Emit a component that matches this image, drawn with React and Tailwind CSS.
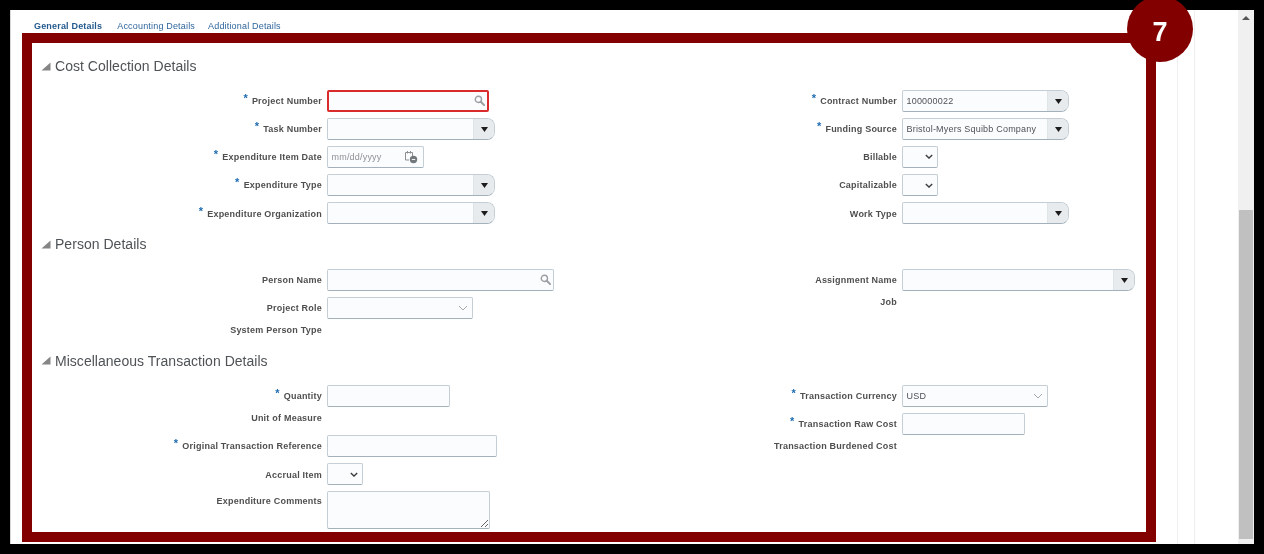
const FONT = "font-['Liberation_Sans',Arial,sans-serif]";

function Tri() {
  return (
    <svg width="10" height="9" viewBox="0 0 10 9" className="shrink-0">
      <path d="M9.5 0.5V8.5H0.5Z" fill="#858585" />
    </svg>
  );
}

function SearchIcon() {
  return (
    <svg width="11" height="11" viewBox="0 0 12 12" fill="none" className="shrink-0">
      <circle cx="4.8" cy="4.8" r="3.4" stroke="#9a9ea2" strokeWidth="1.5" />
      <path d="M7.4 7.4L11 11" stroke="#9a9ea2" strokeWidth="2.1" strokeLinecap="round" />
    </svg>
  );
}

function CalIcon() {
  return (
    <svg width="14" height="14" viewBox="0 0 14 14" fill="none" className="shrink-0">
      <path d="M1.5 2.5H8.5V6M1.5 2.5V10H5" stroke="#8b8f92" strokeWidth="1" />
      <path d="M3.5 1V3.5M6.5 1V3.5" stroke="#8b8f92" strokeWidth="1" />
      <circle cx="9.5" cy="9.5" r="3.7" fill="#73787c" />
      <path d="M7.8 9.5H11.2" stroke="#ffffff" strokeWidth="0.9" />
    </svg>
  );
}

function Chevron({ light }) {
  return (
    <svg width={light ? 10 : 8} height={light ? 6 : 5} viewBox="0 0 10 6" fill="none" className="shrink-0">
      <path d="M1 1L5 5L9 1" stroke={light ? "#a4abb0" : "#3f3f3f"} strokeWidth={light ? 1 : 1.7} />
    </svg>
  );
}

function Label({ req, children }) {
  return (
    <span className="text-[9px] leading-[12px] font-bold tracking-[0.22px] text-[#4f4f4f] whitespace-nowrap">
      {req && <span className="text-[#1d6bb0] text-[11px] leading-[0] font-bold relative -top-[2px] mr-[4px]">*</span>}
      {children}
    </span>
  );
}

function Box({ w, h = "h-[22px]", red, round, children, className = "" }) {
  return (
    <div
      className={`${w} ${h} flex items-stretch bg-[#fbfcfd] ${
        red
          ? "border-2 border-[#d92b2b] rounded-[2px]"
          : "border border-[#c4ced4] border-b-[#a3b1ba] rounded-[2px]"
      } ${round ? "rounded-r-[8px]" : ""} ${className}`}
    >
      {children}
    </div>
  );
}

function Val({ children, muted }) {
  return (
    <span className={`flex-1 pl-[3.5px] self-center text-[9px] leading-[12px] pt-[1px] whitespace-nowrap tracking-[0.2px] ${muted ? "text-[#8d9297]" : "text-[#4e5257]"}`}>
      {children}
    </span>
  );
}

function Combo({ w, value }) {
  return (
    <Box w={w} round>
      <Val>{value}</Val>
      <div className="w-[21px] pt-[1px] bg-[#e8ebed] rounded-r-[7px] flex items-center justify-center border-l border-[#dfe4e7]">
        <svg width="7" height="5" viewBox="0 0 7 5"><path d="M0 0H7L3.5 5Z" fill="#1c1c1c" /></svg>
      </div>
    </Box>
  );
}

function SearchBox({ w, red }) {
  return (
    <Box w={w} red={red}>
      <span className="flex-1" />
      <span className="self-center pr-[2px]"><SearchIcon /></span>
    </Box>
  );
}

function Select({ w, value, light }) {
  return (
    <Box w={w}>
      <Val>{value}</Val>
      <span className={`self-center ${light ? "pr-[4px]" : "pr-[4px]"}`}><Chevron light={light} /></span>
    </Box>
  );
}

function Row({ label, req, tall, children, labelW }) {
  return (
    <div className={`flex gap-[5px] ${tall ? "h-[28.2px] items-center" : "h-[22px] items-start"}`}>
      <div className={`${labelW} shrink-0 text-right leading-[12px] ${tall ? "pb-[1.5px]" : ""}`}>
        <Label req={req}>{label}</Label>
      </div>
      {children}
    </div>
  );
}

function Heading({ children, className = "" }) {
  return (
    <h2 className={`flex items-center gap-[4px] pl-[9px] text-[14px] leading-[18px] tracking-[0.03px] font-normal text-[#4f5356] ${className}`}>
      <Tri />
      {children}
    </h2>
  );
}

function Section({ left, right, className = "" }) {
  return (
    <div className={`flex ${className}`}>
      <div className="w-[665px] shrink-0 flex flex-col">{left}</div>
      <div className="flex-1 flex flex-col">{right}</div>
    </div>
  );
}

const L = "w-[290px]";
const R = "w-[200px]";

export default function App() {
  return (
    <div className={`${FONT} h-[554px] w-[1264px] overflow-hidden bg-black p-[10px] blur-[0.35px]`}>
      <div className="h-[534px] bg-white flex border-l border-[#d8d8d8]">
        <div className="w-[1145px] shrink-0 pl-[11px] flex flex-col">
          <nav className="h-[23px] pl-[12px] flex items-center text-[9px] text-[#2f669c] pt-[10px]">
            <span className="font-bold tracking-[0.18px] text-[#245a8e] mr-[15px]">General Details</span>
            <span className="tracking-[0.18px] mr-[13px]">Accounting Details</span>
            <span className="tracking-[0.18px]">Additional Details</span>
          </nav>
          <div className="relative h-[509px] border-[10px] border-[#820000] bg-white">
            <div className="absolute left-[1095px] -top-[47px] z-10 w-[66px] h-[66px] rounded-full bg-[#820000] flex items-center justify-center text-white font-bold text-[27px] leading-none pt-[6px]">
              7
            </div>
            <Heading className="mt-[14px]">Cost Collection Details</Heading>
            <Section
              className="mt-[11.5px]"
              left={
                <>
                  <Row tall labelW={L} label="Project Number" req><SearchBox w="w-[162px]" red /></Row>
                  <Row tall labelW={L} label="Task Number" req><Combo w="w-[168px]" /></Row>
                  <Row tall labelW={L} label="Expenditure Item Date" req>
                    <Box w="w-[97px]">
                      <Val muted>mm/dd/yyyy</Val>
                      <span className="self-center pr-[5px]"><CalIcon /></span>
                    </Box>
                  </Row>
                  <Row tall labelW={L} label="Expenditure Type" req><Combo w="w-[168px]" /></Row>
                  <Row tall labelW={L} label="Expenditure Organization" req><Combo w="w-[168px]" /></Row>
                </>
              }
              right={
                <>
                  <Row tall labelW={R} label="Contract Number" req><Combo w="w-[167px]" value="100000022" /></Row>
                  <Row tall labelW={R} label="Funding Source" req><Combo w="w-[167px]" value="Bristol-Myers Squibb Company" /></Row>
                  <Row tall labelW={R} label="Billable"><Select w="w-[36px]" /></Row>
                  <Row tall labelW={R} label="Capitalizable"><Select w="w-[36px]" /></Row>
                  <Row tall labelW={R} label="Work Type"><Combo w="w-[167px]" /></Row>
                </>
              }
            />
            <Heading className="mt-[8px]">Person Details</Heading>
            <Section
              className="mt-[12px]"
              left={
                <>
                  <Row tall labelW={L} label="Person Name"><SearchBox w="w-[227px]" /></Row>
                  <Row tall labelW={L} label="Project Role"><Select w="w-[146px]" light /></Row>
                  <Row labelW={L} label="System Person Type" />
                </>
              }
              right={
                <>
                  <Row tall labelW={R} label="Assignment Name"><Combo w="w-[233px]" /></Row>
                  <Row labelW={R} label="Job" />
                </>
              }
            />
            <Heading className="mt-[8px]">Miscellaneous Transaction Details</Heading>
            <Section
              className="mt-[12px]"
              left={
                <>
                  <Row tall labelW={L} label="Quantity" req><Box w="w-[123px]" /></Row>
                  <Row labelW={L} label="Unit of Measure" />
                  <Row tall labelW={L} label="Original Transaction Reference" req><Box w="w-[170px]" /></Row>
                  <Row tall labelW={L} label="Accrual Item"><Select w="w-[36px]" /></Row>
                  <div className="flex gap-[5px] items-start mt-[3px]">
                    <div className={`${L} shrink-0 text-right leading-[12px] pt-[1.5px]`}>
                      <Label>Expenditure Comments</Label>
                    </div>
                    <Box w="w-[163px]" h="h-[38px]" className="relative">
                      <svg width="9" height="9" viewBox="0 0 9 9" className="absolute right-[0px] bottom-[0px]" fill="none">
                        <path d="M1 8L8 1M5 8L8 5" stroke="#555" strokeWidth="0.9" />
                      </svg>
                    </Box>
                  </div>
                </>
              }
              right={
                <>
                  <Row tall labelW={R} label="Transaction Currency" req><Select w="w-[146px]" value="USD" light /></Row>
                  <Row tall labelW={R} label="Transaction Raw Cost" req><Box w="w-[123px]" /></Row>
                  <Row labelW={R} label="Transaction Burdened Cost" />
                </>
              }
            />
          </div>
        </div>
        <div className="ml-[21px] w-[18px] border-x border-[#efefef] shrink-0" />
        <div className="flex-1" />
        <div className="w-[16px] shrink-0 bg-[#f0f0f0] flex flex-col items-center">
          <svg width="8" height="4" viewBox="0 0 8 4" className="mt-[6px] mb-[190px] shrink-0"><path d="M4 0L8 4H0Z" fill="#555" /></svg>
          <div className="w-[14px] h-[329px] bg-[#c0c0c0]" />
        </div>
      </div>
    </div>
  );
}
